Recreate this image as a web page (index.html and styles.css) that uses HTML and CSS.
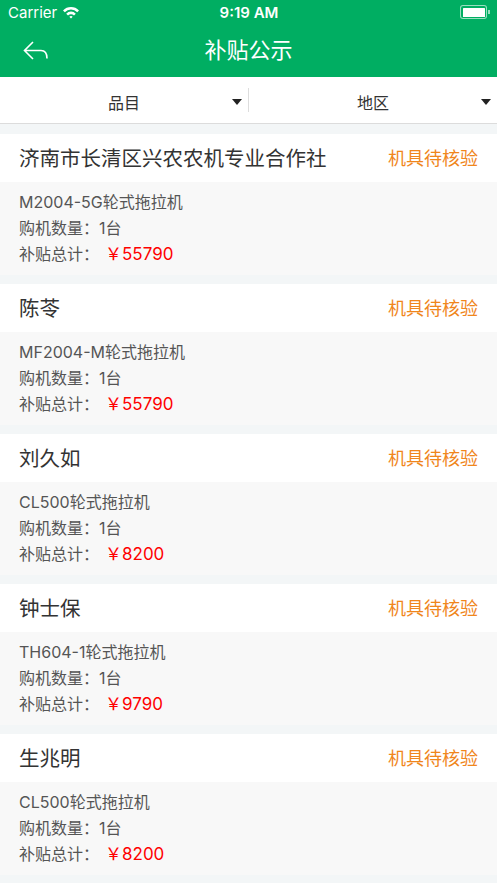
FILE: index.html
```html
<!DOCTYPE html>
<html lang="zh-CN">
<head>
  <meta charset="UTF-8" />
  <meta name="viewport" content="width=device-width, initial-scale=1.0" />
  <title>补贴公示</title>
  <link rel="stylesheet" href="styles.css">
</head>
<body>
  <div class="header">
    <div class="status">
      <div class="carrier">Carrier
        <svg width="18" height="13" viewBox="0 0 18 13"><path d="M1 4.5 A11 11 0 0 1 17 4.5 L15.2 6.3 A8.5 8.5 0 0 0 2.8 6.3 Z" fill="#fff"/><path d="M4.2 7.7 A6.5 6.5 0 0 1 13.8 7.7 L12 9.5 A4 4 0 0 0 6 9.5 Z" fill="#fff"/><path d="M7.3 10.8 A2.4 2.4 0 0 1 10.7 10.8 L9 12.6 Z" fill="#fff"/></svg>
      </div>
      <div class="time">9:19 AM</div>
      <div class="battery"><span class="cell"></span><span class="tip"></span></div>
    </div>
    <div class="nav">
      <svg class="back" width="28" height="22" viewBox="0 0 28 22"><path d="M10 2 L1.5 10.5 L10 19 M1.5 10.5 H18 Q24 10.5 24 18.5" fill="none" stroke="#fff" stroke-width="1.6"/></svg>
      <div class="title">补贴公示</div>
    </div>
  </div>

  <div class="filters">
    <div class="filter"><span>品目</span><i class="caret"></i></div>
    <div class="sep"></div>
    <div class="filter"><span>地区</span><i class="caret"></i></div>
  </div>

  <div class="list">
    <div class="card">
      <div class="card-head"><span class="name">济南市长清区兴农农机专业合作社</span><span class="state">机具待核验</span></div>
      <div class="card-body">
        <p>M2004-5G轮式拖拉机</p>
        <p>购机数量：1台</p>
        <p>补贴总计：<span class="money">￥55790</span></p>
      </div>
    </div>
    <div class="card">
      <div class="card-head"><span class="name">陈苓</span><span class="state">机具待核验</span></div>
      <div class="card-body">
        <p>MF2004-M轮式拖拉机</p>
        <p>购机数量：1台</p>
        <p>补贴总计：<span class="money">￥55790</span></p>
      </div>
    </div>
    <div class="card">
      <div class="card-head"><span class="name">刘久如</span><span class="state">机具待核验</span></div>
      <div class="card-body">
        <p>CL500轮式拖拉机</p>
        <p>购机数量：1台</p>
        <p>补贴总计：<span class="money">￥8200</span></p>
      </div>
    </div>
    <div class="card">
      <div class="card-head"><span class="name">钟士保</span><span class="state">机具待核验</span></div>
      <div class="card-body">
        <p>TH604-1轮式拖拉机</p>
        <p>购机数量：1台</p>
        <p>补贴总计：<span class="money">￥9790</span></p>
      </div>
    </div>
    <div class="card">
      <div class="card-head"><span class="name">生兆明</span><span class="state">机具待核验</span></div>
      <div class="card-body">
        <p>CL500轮式拖拉机</p>
        <p>购机数量：1台</p>
        <p>补贴总计：<span class="money">￥8200</span></p>
      </div>
    </div>
  </div>
</body>
</html>
```

FILE: styles.css
```css
body {
  margin: 0;
  font-family: Inter, "Noto Sans CJK SC", sans-serif;
  background: #f3f6f7;
  color: #333;
  height: 883px;
  overflow: hidden;
}
.header {
  background: #00ae62;
  color: #fff;
}
.status {
  height: 24px;
  display: flex;
  align-items: center;
  justify-content: space-between;
  padding: 0 7px 0 8px;
  font-size: 15px;
}
.carrier {
  display: flex;
  align-items: center;
  gap: 5px;
  width: 100px;
}
.time {
  font-weight: 600;
}
.battery {
  width: 100px;
  display: flex;
  justify-content: flex-end;
  align-items: center;
}
.cell {
  width: 22px;
  height: 9px;
  border: 1.5px solid rgba(255,255,255,0.6);
  border-radius: 3px;
  padding: 1.5px;
  background: #fff;
  background-clip: content-box;
}
.tip {
  width: 2px;
  height: 4px;
  background: rgba(255,255,255,0.6);
  margin-left: 1px;
}
.nav {
  height: 53px;
  display: flex;
  align-items: center;
  justify-content: center;
  position: relative;
}
.back {
  position: absolute;
  left: 23px;
  top: 16px;
}
.title {
  font-size: 22px;
  margin-top: -5px;
}
.filters {
  height: 46px;
  background: #fff;
  border-bottom: 1px solid #dcdcdc;
  display: flex;
  align-items: center;
}
.filter {
  flex: 1;
  display: flex;
  align-items: center;
  justify-content: center;
  position: relative;
  font-size: 16px;
  padding-top: 4px;
}
.caret {
  position: absolute;
  right: 6px;
  top: 13px;
  border-left: 5.5px solid transparent;
  border-right: 5.5px solid transparent;
  border-top: 6px solid #222;
}
.sep {
  width: 1px;
  height: 24px;
  background: #ddd;
}
.list {
  padding-top: 10px;
}
.card {
  margin-bottom: 9px;
}
.card-head {
  height: 48px;
  background: #fff;
  display: flex;
  align-items: center;
  justify-content: space-between;
  padding: 0 19px;
}
.name {
  font-size: 20.5px;
  color: #333;
  margin-top: -2px;
}
.state {
  font-size: 18px;
  color: #f0861c;
  margin-top: -2px;
}
.card-body {
  background: #f8f8f8;
  padding: 7px 19px 8px;
}
.card-body p {
  margin: 0;
  font-size: 16px;
  line-height: 26px;
  color: #555;
}
.money {
  color: #ff0000;
  margin-left: 6px;
  font-size: 17px;
}
```
